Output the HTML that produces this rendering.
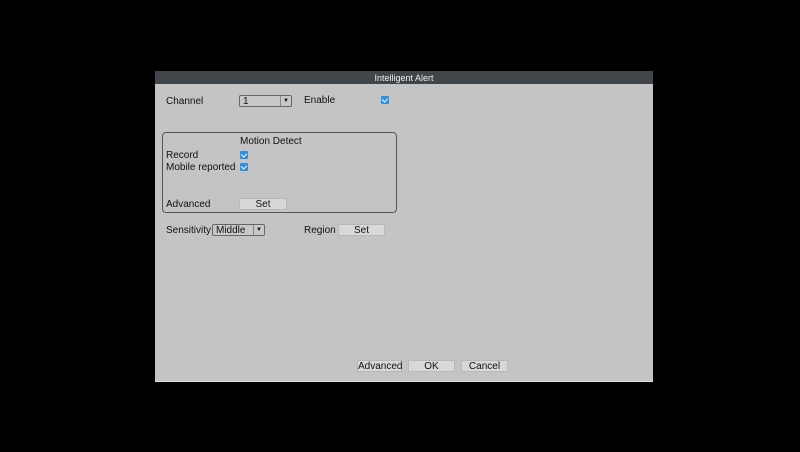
<!DOCTYPE html>
<html><head><style>
body{margin:0;width:800px;height:452px;background:#000;position:relative;overflow:hidden;font-family:"Liberation Sans",sans-serif;font-size:10px;color:#111}
.dlg{position:absolute;left:155px;top:71px;width:498px;height:310px;background:#c4c4c4;border-bottom:1px solid #e0e0e0}
.title{position:absolute;left:0;top:0;width:100%;height:13px;background:#3f4549;color:#eee;text-align:center;line-height:14px;font-size:9px}
.a{position:absolute;white-space:nowrap}
.cb{position:absolute;width:8px;height:8px;background:#2f8fe0;border-radius:1px}
.cb:after{content:"";position:absolute;left:2px;top:1px;width:3px;height:4px;border:solid #fff;border-width:0 1px 1px 0;transform:rotate(45deg)}
.btn{position:absolute;height:12px;background:#d8d8d8;border:1px solid #b8b8b8;text-align:center;line-height:11px;box-sizing:border-box}
.sel{position:absolute;height:12px;border:1px solid #666;border-radius:2px;background:#c8c8c8;box-sizing:border-box;line-height:11px;padding-left:3px}
.sel i{position:absolute;right:0;top:0;width:10px;height:10px;border-left:1px solid #888;font-style:normal;font-size:6px;text-align:center;line-height:10px}
.box{position:absolute;left:7px;top:61px;width:233px;height:79px;border:1px solid #555;border-radius:4px}
</style></head><body>
<div class="dlg">
<div class="title">Intelligent Alert</div>
<div class="a" style="left:11px;top:25px">Channel</div>
<div class="sel" style="left:84px;top:24px;width:53px">1<i>▼</i></div>
<div class="a" style="left:149px;top:24px">Enable</div>
<div class="cb" style="left:226px;top:25px"></div>
<div class="box"></div>
<div class="a" style="left:85px;top:65px">Motion Detect</div>
<div class="a" style="left:11px;top:79px">Record</div>
<div class="cb" style="left:85px;top:80px"></div>
<div class="a" style="left:11px;top:91px">Mobile reported</div>
<div class="cb" style="left:85px;top:92px"></div>
<div class="a" style="left:11px;top:128px">Advanced</div>
<div class="btn" style="left:84px;top:127px;width:48px">Set</div>
<div class="a" style="left:11px;top:154px">Sensitivity</div>
<div class="sel" style="left:57px;top:153px;width:53px">Middle<i>▼</i></div>
<div class="a" style="left:149px;top:154px">Region</div>
<div class="btn" style="left:183px;top:153px;width:47px">Set</div>
<div class="btn" style="left:202px;top:289px;width:45px">Advanced</div>
<div class="btn" style="left:253px;top:289px;width:47px">OK</div>
<div class="btn" style="left:306px;top:289px;width:47px">Cancel</div>
</div>
</body></html>
